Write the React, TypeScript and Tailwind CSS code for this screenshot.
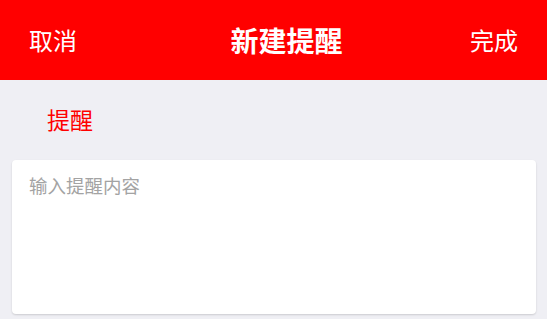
import React from 'react';

// =====================================================
// NewReminder — 新建提醒 page
// =====================================================

const font = 'font-["Noto_Sans_CJK_SC","Noto_Sans",sans-serif]';

export default function App() {
  return (
    <div className={`min-h-[319px] w-full bg-[#efeff4] ${font}`}>
      {/* Header */}
      <div className="flex h-[80px] items-center bg-[#ff0000] pl-[29px] pr-[29px] text-white">
        <button className="text-[24px] leading-none">取消</button>
        <div className="flex flex-1 justify-center pl-[26px]">
          <h1 className="text-[28px] font-bold leading-none">新建提醒</h1>
        </div>
        <button className="text-[24px] leading-none">完成</button>
      </div>

      {/* Label */}
      <div className="flex h-[80px] items-center pb-[2px] pl-[47px]">
        <span className="text-[23px] leading-none text-[#ff0000]">提醒</span>
      </div>

      {/* Content */}
      <div className="ml-[12px] mr-[11px] h-[154px] rounded-[4px] bg-white shadow-[0_1px_2px_rgba(0,0,0,0.15)]">
        <textarea
          placeholder="输入提醒内容"
          className="h-full w-full resize-none bg-transparent px-[17px] pt-[12px] text-[18.5px] leading-[27px] text-[#333] placeholder-[#a3a3a3] outline-none"
        />
      </div>
    </div>
  );
}
